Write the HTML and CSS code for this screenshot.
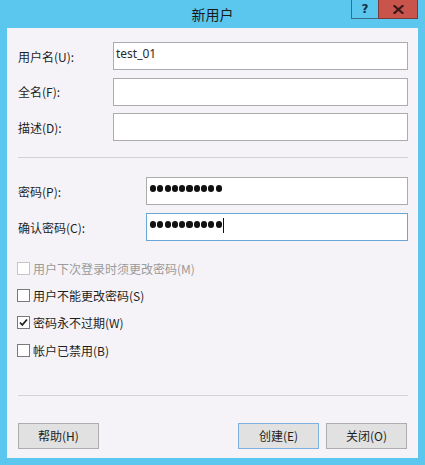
FILE: index.html
```html
<!DOCTYPE html>
<html lang="zh-CN">
<head>
<meta charset="utf-8">
<title>新用户</title>
<link rel="stylesheet" href="styles.css">
</head>
<body>
<div class="window">
  <div class="titlebar">
    <div class="title">新用户</div>
    <div class="caption-buttons">
      <div class="cap-btn help">?</div>
      <div class="cap-btn close">
        <svg width="11" height="9" viewBox="0 0 11 9"><path d="M1.5 1 L9.5 8 M9.5 1 L1.5 8" stroke="#3a1a18" stroke-width="2.2" stroke-linecap="square"/></svg>
      </div>
    </div>
  </div>
  <div class="panel">
    <div class="field-group">
      <div class="row">
        <label class="label">用户名(U):</label>
        <div class="input wide"><span class="value">test_01</span></div>
      </div>
      <div class="row">
        <label class="label">全名(F):</label>
        <div class="input wide"></div>
      </div>
      <div class="row">
        <label class="label">描述(D):</label>
        <div class="input wide"></div>
      </div>
    </div>
    <div class="separator"></div>
    <div class="field-group pw">
      <div class="row">
        <label class="label">密码(P):</label>
        <div class="input narrow"><span class="dots"><i></i><i></i><i></i><i></i><i></i><i></i><i></i><i></i><i></i><i></i></span></div>
      </div>
      <div class="row">
        <label class="label">确认密码(C):</label>
        <div class="input narrow focused"><span class="dots"><i></i><i></i><i></i><i></i><i></i><i></i><i></i><i></i><i></i><i></i></span><span class="caret"></span></div>
      </div>
    </div>
    <div class="checks">
      <div class="check disabled"><span class="box"></span><span>用户下次登录时须更改密码(M)</span></div>
      <div class="check"><span class="box"></span><span>用户不能更改密码(S)</span></div>
      <div class="check"><span class="box"><svg width="11" height="11" viewBox="0 0 11 11"><path d="M2 5.5 L4.3 8 L9 2.5" fill="none" stroke="#1e1e1e" stroke-width="1.8"/></svg></span><span>密码永不过期(W)</span></div>
      <div class="check"><span class="box"></span><span>帐户已禁用(B)</span></div>
    </div>
    <div class="separator bottom"></div>
    <div class="buttons">
      <div class="btn">帮助(H)</div>
      <div class="spacer"></div>
      <div class="btn default">创建(E)</div>
      <div class="btn">关闭(O)</div>
    </div>
  </div>
</div>
</body>
</html>
```
FILE: styles.css
```css
html, body {
  margin: 0;
  padding: 0;
}
body {
  width: 425px;
  height: 465px;
  overflow: hidden;
  font-family: "Noto Sans CJK SC", "Noto Sans", sans-serif;
  font-size: 12px;
  color: #1e1e1e;
}
.window {
  width: 425px;
  height: 465px;
  background: #5bc6ee;
  display: flex;
  flex-direction: column;
}
.titlebar {
  height: 28px;
  position: relative;
  display: flex;
  align-items: center;
  justify-content: center;
}
.title {
  font-size: 14px;
  color: #1a1a1a;
  margin-top: -1px;
}
.caption-buttons {
  position: absolute;
  top: 0;
  right: 7px;
  display: flex;
  height: 20px;
}
.cap-btn {
  height: 19px;
  display: flex;
  align-items: center;
  justify-content: center;
  box-sizing: border-box;
  border: 1px solid #3b6c8a;
  border-top: none;
}
.help {
  width: 27px;
  background: #5bc6ee;
  font-family: "DejaVu Sans", sans-serif;
  font-weight: bold;
  font-size: 12px;
  color: #16324a;
  border-right: none;
}
.close {
  width: 40px;
  background: #c9544c;
  border-color: #7a3a36;
}
.panel {
  margin: 0 7px;
  height: 430px;
  background: #f5f3f7;
  box-sizing: border-box;
  padding: 14px 10px 0 11px;
  display: flex;
  flex-direction: column;
}
.field-group {
  display: flex;
  flex-direction: column;
  gap: 7.5px;
}
.row {
  display: flex;
  align-items: center;
  height: 28px;
}
.label {
  flex: 0 0 auto;
}
.input {
  height: 28px;
  box-sizing: border-box;
  background: #fff;
  border: 1px solid #acacac;
  display: flex;
  align-items: center;
  padding-left: 2px;
  margin-left: auto;
}
.input.wide {
  width: 295px;
}
.input.narrow {
  width: 262px;
}
.input.focused {
  border-color: #6aa6d8;
}
.value {
  font-family: "Noto Sans", sans-serif;
  font-size: 12px;
  color: #2a2a2a;
  margin-top: -6px;
}
.dots {
  display: flex;
  gap: 1.2px;
  margin-top: -5px;
  margin-left: 1px;
}
.dots i {
  width: 6.1px;
  height: 6.1px;
  border-radius: 50%;
  background: #111;
}
.caret {
  width: 1px;
  height: 15px;
  background: #111;
  margin-left: 1px;
  margin-top: -3px;
}
.separator {
  height: 1px;
  background: #d3d3d5;
  margin: 15.5px 0 0 0;
}
.field-group.pw {
  margin-top: 19.5px;
  gap: 8px;
}
.checks {
  margin-top: 13.5px;
  display: flex;
  flex-direction: column;
}
.check {
  height: 27.3px;
  display: flex;
  align-items: center;
  gap: 3px;
  color: #1e1e1e;
}
.check.disabled {
  color: #9a9a9a;
}
.box {
  width: 13px;
  height: 13px;
  box-sizing: border-box;
  border: 1px solid #7a7a7a;
  background: #fff;
  display: flex;
  align-items: center;
  justify-content: center;
  margin-left: -1px;
}
.check.disabled .box {
  border-color: #c6c6c6;
}
.separator.bottom {
  margin-top: 31px;
}
.buttons {
  margin-top: 27px;
  display: flex;
  gap: 7px;
  margin-right: 1px;
}
.spacer {
  flex: 1;
}
.btn {
  width: 81px;
  height: 26px;
  box-sizing: border-box;
  background: #e1e1e1;
  border: 1px solid #adadad;
  display: flex;
  align-items: center;
  justify-content: center;
  color: #1e1e1e;
}
.btn.default {
  border-color: #7fb0de;
}
```
